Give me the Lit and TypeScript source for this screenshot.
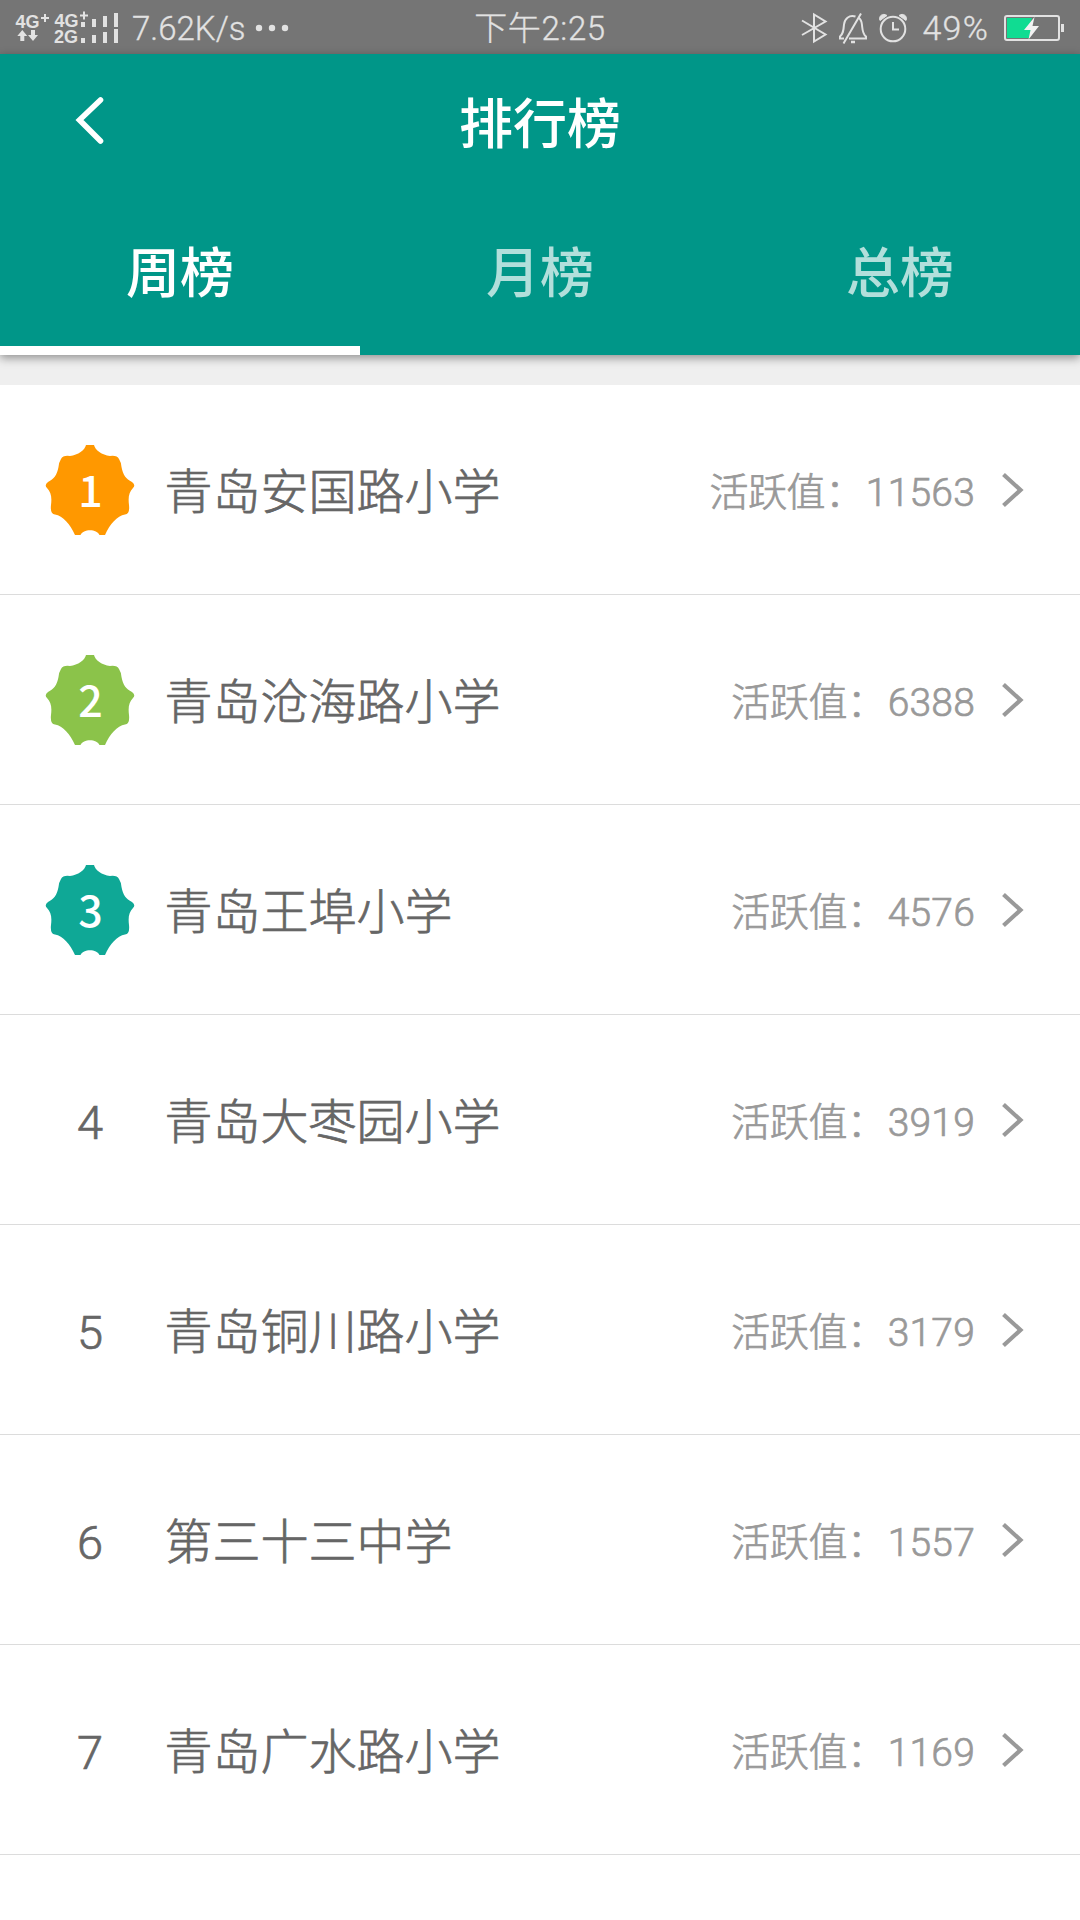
import { LitElement, html, css, svg } from "lit";
import { customElement, property, state } from "lit/decorators.js";
import { classMap } from "lit/directives/class-map.js";

interface School {
  name: string;
  score: number;
}

const SCHOOLS: School[] = [
  { name: "青岛安国路小学", score: 11563 },
  { name: "青岛沧海路小学", score: 6388 },
  { name: "青岛王埠小学", score: 4576 },
  { name: "青岛大枣园小学", score: 3919 },
  { name: "青岛铜川路小学", score: 3179 },
  { name: "第三十三中学", score: 1557 },
  { name: "青岛广水路小学", score: 1169 },
];

const BADGE_COLORS = ["#ff9800", "#8bc34a", "#0fa896"];

@customElement("status-bar")
class StatusBar extends LitElement {
  static styles = css`
    :host {
      display: grid;
      grid-template-columns: 1fr auto 1fr;
      align-items: center;
      height: 54px;
      background: #757575;
      color: #e2e2e2;
      font: 300 33px/54px Roboto, "Noto Sans CJK SC", sans-serif;
      -webkit-text-stroke: 0.3px currentColor;
    }
    .side {
      display: flex;
      align-items: center;
      height: 54px;
    }
    .end {
      justify-content: flex-end;
    }
    svg {
      display: block;
      flex: none;
      -webkit-text-stroke: 0;
    }
    .speed {
      margin-left: 12px;
      padding-top: 2px;
    }
    .time {
      padding-top: 2px;
      letter-spacing: 0.6px;
    }
    .percent {
      margin: 0 15px 0 13px;
      font-size: 34px;
      letter-spacing: 1.2px;
    }
    .net {
      font: 700 18px "Liberation Sans", sans-serif;
    }
  `;

  render() {
    return html`
      <div class="side">
        <svg width="120" height="54" viewBox="0 0 120 54" fill="#e2e2e2">
          <text class="net">
            <tspan x="15.500" y="26.700">4G</tspan><tspan x="54.500" y="25.700">4G</tspan><tspan x="54" y="41.700">2G</tspan>
          </text>
          <path
            d="M41 17h8M45 13v8M80 14.500h8M84 10.500v8"
            stroke="#e2e2e2"
            stroke-width="2"
          />
          <path d="M22.300 29l5 6h-3v5h-4v-5h-3zM33 40l-5-6h3v-5h4v5h3z" />
          <path
            d="M81 21h4v5h-4zM92 18h4v8h-4zM103 15h4v11h-4zM114 12h4v14h-4zM81 37h4v5h-4zM92 34h4v8h-4zM103 31h4v11h-4zM114 28h4v14h-4z"
          />
        </svg>
        <span class="speed">7.62K/s</span>
        <svg width="54" height="54" viewBox="0 0 54 54" fill="#e2e2e2">
          <circle cx="13" cy="27" r="3.200" />
          <circle cx="26" cy="27" r="3.200" />
          <circle cx="39" cy="27" r="3.200" />
        </svg>
      </div>
      <span class="time">下午2:25</span>
      <div class="side end">
        <svg
          width="110"
          height="54"
          viewBox="800 0 110 54"
          fill="none"
          stroke="#e2e2e2"
          stroke-width="2"
        >
          <path d="M802 19.500L825.500 33.500L814 40.500V13.500L825.500 20.500L802 34" />
          <path
            d="M855.500 15.500C849 13.500 844.500 18 844 23.500C843.500 30 843 33 840 35.500V37.500H844M849 37.500H866V35.500C862.500 33 862.500 29 862 24C861.700 20.500 860.500 18 858.500 16.500M861 12.500L843.500 42.500"
          />
          <path d="M851 41h4" stroke-width="2.500" />
          <circle cx="893" cy="28" r="12.300" />
          <path d="M893 21v7.500h6" />
          <path
            d="M880 19.500C878 15 883 11.500 887 14.500ZM906 19.500C908 15 903 11.500 899 14.500Z"
            fill="#e2e2e2"
            stroke-width="1"
          />
        </svg>
        <span class="percent">49%</span>
        <svg width="76" height="54" viewBox="1004 0 76 54">
          <rect x="1005" y="15" width="54" height="24" rx="2" fill="none" stroke="#e2e2e2" stroke-width="2" />
          <path d="M1007 17h25l-4 12h3l-2 8h-22z" fill="#10dc92" />
          <path d="M1034.500 16L1024 29h6.500l-2 9.500L1039 25h-6.500z" fill="#f2f2f2" />
          <path d="M1061 23h3v8h-3z" fill="#e2e2e2" />
        </svg>
      </div>
    `;
  }
}

@customElement("rank-row")
class RankRow extends LitElement {
  @property({ type: Number }) rank = 0;
  @property() name = "";
  @property({ type: Number }) score = 0;

  static styles = css`
    :host {
      display: flex;
      align-items: center;
      box-sizing: border-box;
      height: 210px;
      padding: 0 54px 0 45px;
      border-bottom: 1px solid #dcdcdc;
      background: #fff;
      font-family: Roboto, "Noto Sans CJK SC", sans-serif;
      font-weight: 300;
      -webkit-text-stroke: 0.7px currentColor;
    }
    .rank {
      width: 90px;
      text-align: center;
      font-size: 47px;
      line-height: 60px;
      color: #666;
      padding-top: 6px;
    }
    .badge {
      display: block;
      width: 90px;
      height: 90px;
      -webkit-text-stroke: 0;
    }
    .digit {
      font: 500 43px "Noto Sans CJK SC", sans-serif;
      fill: #fff;
    }
    .name {
      flex: 1;
      margin-left: 29.500px;
      padding-top: 6px;
      font-size: 48px;
      line-height: 60px;
      color: #666;
    }
    .value {
      display: flex;
      font-size: 39px;
      line-height: 60px;
      color: #999;
      padding-top: 6px;
    }
    .label {
      letter-spacing: -0.4px;
      margin-right: 2px;
    }
    .score {
      letter-spacing: 0.2px;
    }
    .arrow {
      display: block;
      margin-left: 25px;
    }
  `;

  private renderBadge() {
    return html`
      <svg class="badge" viewBox="0 0 90 90">
        <path
          fill=${BADGE_COLORS[this.rank - 1]}
          d="M41 0H49C50 5 57 10 65 11Q72 10 74 14Q76 17 76.500 22C78 30 81 34 87 37Q91 40 88 43C84 47 83 52 84 60Q85 69 80 69.500C72 71 65 79 60 90H54.500C52 83.500 38 83.500 35.500 90H30C25 79 18 71 10 69.500Q5 69 6 60C7 52 6 47 2 43Q-1 40 3 37C9 34 12 30 13.500 22Q14 17 16 14Q18 10 25 11C33 10 40 5 41 0Z"
        />
        ${svg`<text class="digit" x="45.500" y="61.800" text-anchor="middle">${this.rank}</text>`}
      </svg>
    `;
  }

  render() {
    return html`
      ${this.rank <= 3 ? this.renderBadge() : html`<span class="rank">${this.rank}</span>`}
      <span class="name">${this.name}</span>
      <span class="value"><span class="label">活跃值：</span><span class="score">${this.score}</span></span>
      <svg class="arrow" width="26" height="40" viewBox="0 0 26 40" fill="none" stroke="#999" stroke-width="4.200">
        <path d="M3.500 4.500L20.500 20L3.500 35.500" />
      </svg>
    `;
  }
}

@customElement("app-root")
class AppRoot extends LitElement {
  @state() private active = 0;

  static styles = css`
    :host {
      display: flex;
      flex-direction: column;
      height: 1920px;
      overflow: hidden;
      background: #efefef;
      font-family: "Noto Sans CJK SC", sans-serif;
    }
    .header {
      display: flex;
      flex-direction: column;
      height: 301px;
      flex: none;
      background: #009688;
      color: #fff;
      box-shadow: 0 3px 9px rgba(0, 0, 0, 0.4);
      font-size: 54px;
      font-weight: 500;
    }
    .bar {
      display: grid;
      grid-template-columns: 180px 1fr 180px;
      align-items: center;
      flex: none;
      height: 134px;
    }
    .back {
      display: block;
      margin-left: 72px;
    }
    .title {
      text-align: center;
      line-height: 80px;
    }
    .tabs {
      display: flex;
      flex: 1;
    }
    .tab {
      flex: 1;
      box-sizing: border-box;
      padding-top: 42px;
      border-bottom: 9px solid transparent;
      text-align: center;
      line-height: 80px;
      color: #b2dfdb;
      cursor: pointer;
    }
    .active {
      color: #fff;
      border-color: #fff;
    }
    .list {
      flex: 1;
      margin-top: 30px;
      background: #fff;
    }
  `;

  render() {
    return html`
      <status-bar></status-bar>
      <div class="header">
        <div class="bar">
          <svg class="back" width="36" height="52" viewBox="0 0 36 52" fill="none" stroke="#fff" stroke-width="5.600" stroke-linecap="round">
            <path d="M28.500 5L7.500 25L28.500 46" />
          </svg>
          <span class="title">排行榜</span>
        </div>
        <div class="tabs">
          ${["周榜", "月榜", "总榜"].map(
            (label, i) => html`<div
              class=${classMap({ tab: true, active: i === this.active })}
              @click=${() => (this.active = i)}
            >${label}</div>`
          )}
        </div>
      </div>
      <div class="list">
        ${SCHOOLS.map(
          (s, i) => html`<rank-row .rank=${i + 1} .name=${s.name} .score=${s.score}></rank-row>`
        )}
      </div>
    `;
  }
}
